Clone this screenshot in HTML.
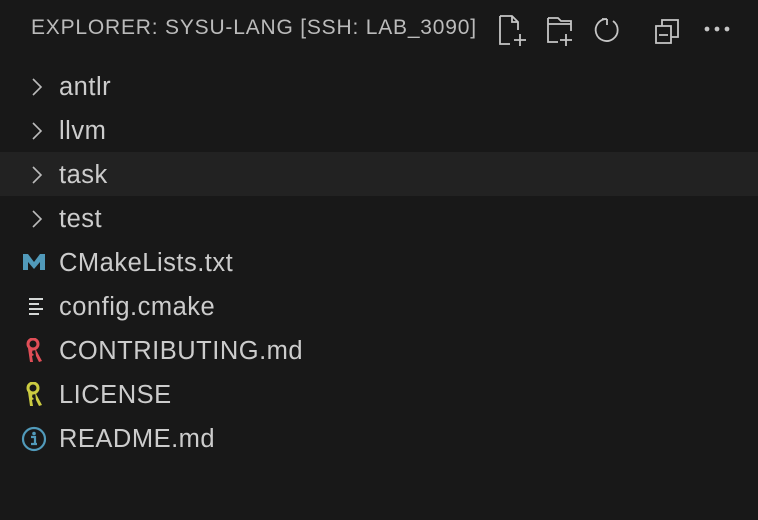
<!DOCTYPE html>
<html><head><style>
body{margin:0;width:758px;height:520px;background:#181818;overflow:hidden;font-family:"Liberation Sans",sans-serif;position:relative}
.title{position:absolute;left:31px;top:16px;font-size:21px;color:#bbbbbb;letter-spacing:0.8px;white-space:nowrap}
.row{position:absolute;left:0;width:758px;height:44px}
.row span{position:absolute;left:59px;top:9px;font-size:25.5px;color:#cccccc;white-space:nowrap;letter-spacing:0.5px}
.row svg{position:absolute}
.hl{background:#222222}
</style></head><body>
<div class="title">EXPLORER: SYSU-LANG [SSH: LAB_3090]</div>
<svg style="position:absolute;left:496px;top:14px" width="240" height="34" fill="none" stroke="#c5c5c5" stroke-width="1.8">
<path d="M4 2h12l6 6v8M4 2v28h10M16 2v6h6M24 20v12M18 26h12"/>
<path d="M52 4h10l3 3h10v10M52 4v24h10M52 10h23M70 20v12M64 26h12"/>
<path d="M111 5a11 11 0 1 0 6 2M111 5v6M111 5h-5" />
<path d="M160 12h15v17h-15zM166 12v-6h16v17h-7M163 21h9"/>
<circle cx="211" cy="15" r="1.5" fill="#c5c5c5"/><circle cx="221" cy="15" r="1.5" fill="#c5c5c5"/><circle cx="231" cy="15" r="1.5" fill="#c5c5c5"/>
</svg>
<div class="row" style="top:64px"><svg style="left:30px;top:13px" width="14" height="20"><path d="M3 2l8 8-8 8" stroke="#bbbbbb" stroke-width="1.6" fill="none"/></svg><span>antlr</span></div>
<div class="row" style="top:108px"><svg style="left:30px;top:13px" width="14" height="20"><path d="M3 2l8 8-8 8" stroke="#bbbbbb" stroke-width="1.6" fill="none"/></svg><span>llvm</span></div>
<div class="row hl" style="top:152px"><svg style="left:30px;top:13px" width="14" height="20"><path d="M3 2l8 8-8 8" stroke="#bbbbbb" stroke-width="1.6" fill="none"/></svg><span>task</span></div>
<div class="row" style="top:196px"><svg style="left:30px;top:13px" width="14" height="20"><path d="M3 2l8 8-8 8" stroke="#bbbbbb" stroke-width="1.6" fill="none"/></svg><span>test</span></div>
<div class="row" style="top:240px"><svg style="left:22px;top:12px" width="24" height="20"><path d="M1 18V2h5l6 8 6-8h5v16h-5V10l-6 7-6-7v8z" fill="#519aba"/></svg><span>CMakeLists.txt</span></div>
<div class="row" style="top:284px"><svg style="left:28px;top:13px" width="20" height="20"><path d="M1 2h14M1 7h10M1 12h14M1 17h10" stroke="#d4d7d6" stroke-width="2"/></svg><span>config.cmake</span></div>
<div class="row" style="top:328px"><svg style="left:24px;top:10px" width="20" height="26" fill="#e04e57"><circle cx="9" cy="6" r="5" fill="none" stroke="#e04e57" stroke-width="3"/><path d="M4 10l2 14h3l-1-6 2-1-2-2 1-5zM11 10l7 13-3 1-3-6z"/></svg><span>CONTRIBUTING.md</span></div>
<div class="row" style="top:372px"><svg style="left:24px;top:10px" width="20" height="26" fill="#cbcb41"><circle cx="9" cy="6" r="5" fill="none" stroke="#cbcb41" stroke-width="3"/><path d="M4 10l2 14h3l-1-6 2-1-2-2 1-5zM11 10l7 13-3 1-3-6z"/></svg><span>LICENSE</span></div>
<div class="row" style="top:416px"><svg style="left:21px;top:10px" width="26" height="26"><circle cx="13" cy="13" r="11" fill="none" stroke="#519aba" stroke-width="2.2"/><circle cx="13" cy="7.5" r="1.8" fill="#519aba"/><path d="M10 11h4v7h2M10 18h6" stroke="#519aba" stroke-width="2.2" fill="none"/></svg><span>README.md</span></div>
</body></html>
